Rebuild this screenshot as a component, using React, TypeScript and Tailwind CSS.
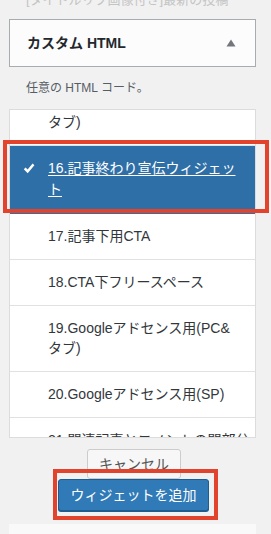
const FONT = { fontFamily: '"Liberation Sans", "Noto Sans CJK JP", sans-serif' };

type Item = { lines: string[]; selected?: boolean };

const items: Item[] = [
  { lines: ["15.Googleアドセンス用(PC&", "タブ)"] },
  { lines: ["16.記事終わり宣伝ウィジェッ", "ト"], selected: true },
  { lines: ["17.記事下用CTA"] },
  { lines: ["18.CTA下フリースペース"] },
  { lines: ["19.Googleアドセンス用(PC&", "タブ)"] },
  { lines: ["20.Googleアドセンス用(SP)"] },
  { lines: ["21.関連記事とコメントの間部分"] },
];

function Check() {
  return (
    <svg width="12" height="11" viewBox="0 0 12 11" className="mt-[5px] ml-[13px] shrink-0">
      <path d="M0.8 6.2 L2.6 4.4 L4.6 6.6 L9.6 0.6 L11.4 2.2 L4.7 10.2 Z" fill="#ffffff" />
    </svg>
  );
}

function Row({ item }: { item: Item }) {
  if (item.selected) {
    return (
      <li className="flex border-b border-[#2f6fa7] bg-[#2f6fa7] pt-[12px] pb-[13px] text-white">
        <div className="flex w-[38px] shrink-0">
          <Check />
        </div>
        <span className="text-[14px] leading-[21px] underline underline-offset-2">
          {item.lines.map((l, i) => (
            <span key={i} className="block whitespace-nowrap">
              {l}
            </span>
          ))}
        </span>
      </li>
    );
  }
  return (
    <li className="border-b border-[#e1e1e1] bg-white pt-[12px] pb-[13px] pl-[38px] text-[14px] leading-[20px] text-[#32373c]">
      {item.lines.map((l, i) => (
        <span key={i} className="block whitespace-nowrap">
          {l}
        </span>
      ))}
    </li>
  );
}

export default function App() {
  return (
    <div className="relative h-[534px] w-[271px] overflow-hidden bg-[#f1f1f1]" style={FONT}>
      <div className="-mt-[8px] pl-[26px] text-[13px] leading-[16px] text-[#c4c4c4] whitespace-nowrap">
        [タイトルリブ画像付き]最新の投稿
      </div>

      <div className="ml-[9px] mt-[11px] flex h-[48px] w-[247px] items-center justify-between border border-[#a9acaf] bg-[#fcfcfc] pl-[17px] pr-[19px]">
        <span className="text-[14px] font-bold text-[#23282d]">カスタム HTML</span>
        <svg width="10" height="8" viewBox="0 0 10 8">
          <path d="M5 0.5 L9.5 7.5 L0.5 7.5 Z" fill="#72777c" />
        </svg>
      </div>

      <div className="mt-[11px] pl-[26px] text-[12px] leading-[20px] text-[#555d66]">
        任意の HTML コード。
      </div>

      <div className="ml-[9px] mt-[11px] h-[329px] w-[247px] overflow-hidden border border-[#dcdcdc] bg-white">
        <ul className="-mt-[30px]">
          {items.map((it, i) => (
            <Row key={i} item={it} />
          ))}
        </ul>
      </div>

      <div className="ml-[87px] mt-[11px] flex h-[30px] w-[94px] items-start justify-center rounded-[3px] border border-[#cccccc] bg-[#f7f7f7] pt-[4px] text-[14px] leading-[20px] text-[#555555]">
        キャンセル
      </div>

      <div className="ml-[58px] flex h-[32px] w-[151px] items-center justify-center rounded-[3px] border border-[#1f5d8f] bg-[#2f7ab7] text-[14px] text-white shadow-[0_1px_0_#1f5d8f]">
        ウィジェットを追加
      </div>

      <div className="ml-[9px] mt-[13px] h-[20px] w-[247px] bg-[#f9f9f9]" />

      <div className="absolute left-[3px] top-[140px] h-[73px] w-[266px] border-[4px] border-[#e2432c]" />
      <div className="absolute left-[53px] top-[469px] h-[51px] w-[165px] border-[4px] border-[#e2432c]" />
    </div>
  );
}
